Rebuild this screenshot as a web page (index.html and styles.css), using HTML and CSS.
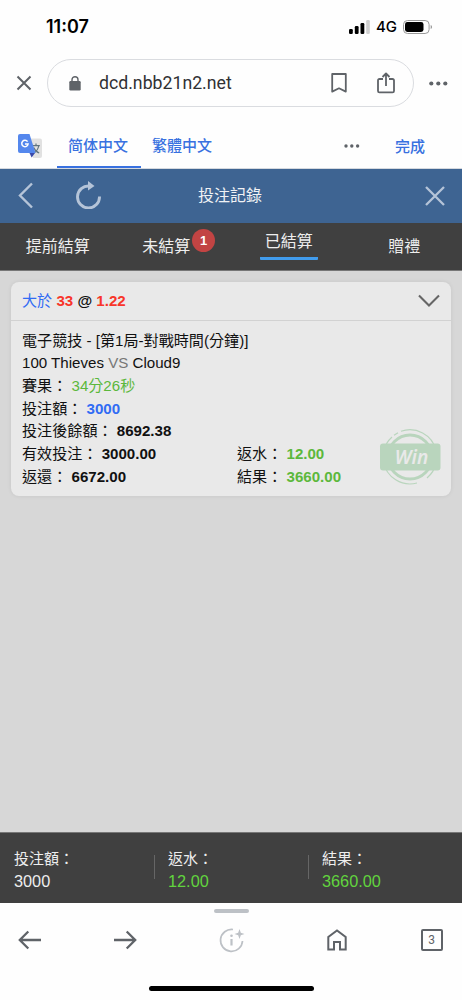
FILE: index.html
```html
<!DOCTYPE html>
<html lang="zh-Hant">
<head>
<meta charset="utf-8">
<title>投注記錄</title>
<link rel="stylesheet" href="styles.css">
</head>
<body>
<div class="status">
  <span class="clock">11:07</span>
  <span class="signals">
    <svg width="21" height="14" viewBox="0 0 21 14"><rect x="0" y="9" width="3.800" height="5" rx="1.2"/><rect x="5.800" y="6" width="3.800" height="8" rx="1.2"/><rect x="11.500" y="3" width="3.800" height="11" rx="1.2"/><rect x="17.200" y="0" width="3.600" height="14" rx="1.2" fill="#d0d0d0"/></svg>
    <span class="carrier">4G</span>
    <svg width="30" height="14" viewBox="0 0 30 14"><rect x=".5" y=".5" width="25.6" height="13" rx="4" fill="none" stroke="#999"/><rect x="2" y="2" width="18.5" height="10" rx="2.4"/><path d="M27.7 5v4q1.400-.5 1.400-2t-1.400-2z" fill="#999"/></svg>
  </span>
</div>
<div class="address">
  <svg class="close" width="16" height="16" viewBox="0 0 16 16" fill="none" stroke="#5f6368" stroke-width="2"><path d="M1.500 1.500l13 13M14.500 1.500l-13 13"/></svg>
  <div class="pill">
    <svg width="12" height="15" viewBox="0 0 12 15"><rect x=".3" y="5" width="11.400" height="9.500" rx="1.200" fill="#5f6368"/><path d="M3 6V3.700a3 3 0 0 1 6 0V6" fill="none" stroke="#5f6368" stroke-width="1.400"/></svg>
    <span class="url">dcd.nbb21n2.net</span>
    <svg class="bookmark" width="16" height="20" viewBox="0 0 16 20" fill="none" stroke="#5f6368" stroke-width="1.800" stroke-linejoin="round"><path d="M1.200 1h13.600v17.600L8 15.300l-6.800 3.300z"/></svg>
    <svg width="18" height="22" viewBox="0 0 18 22" fill="none" stroke="#5f6368" stroke-width="1.800" stroke-linejoin="round"><path d="M6 7H2.500Q1 7 1 8.500v10.400q0 1.500 1.500 1.500h13q1.500 0 1.500-1.500V8.500Q17 7 15.500 7H12M9 14V1.800M5.500 5L9 1.500 12.500 5"/></svg>
  </div>
  <svg width="19" height="5" viewBox="0 0 19 5" fill="#5f6368"><circle cx="2.300" cy="2.500" r="2.100"/><circle cx="9.300" cy="2.500" r="2.100"/><circle cx="16.300" cy="2.500" r="2.100"/></svg>
</div>
<div class="translate" lang="zh-Hans">
  <svg class="g-icon" width="25" height="25" viewBox="0 0 25 25"><path d="M9 4.500h13q2 0 2 2V22q0 2-2 2h-7z" fill="#e1e1e1"/><path d="M11.500 19H17l-3.400 4.500z" fill="#3949ab"/><path d="M14.500 11.700h7.300M18 9.600v2M20.700 12q-1 5-5 7M15.700 13.500q1.500 4 5.500 5.500" fill="none" stroke="#60747e" stroke-width="1.200"/><path d="M2 0h9.500l6 19H2q-2 0-2-2V2q0-2 2-2z" fill="#5487ed"/><path d="M9.600 7.700A3.200 3.200 0 1 0 10.100 10H7" fill="none" stroke="#fff" stroke-width="1.500"/></svg>
  <span class="lang lang-on">简体中文</span>
  <span class="lang lang-off" lang="zh-Hant">繁體中文</span>
  <svg class="dots" width="16" height="4" viewBox="0 0 16 4" fill="#5f6368"><circle cx="2" cy="2" r="1.700"/><circle cx="7.800" cy="2" r="1.700"/><circle cx="13.600" cy="2" r="1.700"/></svg>
  <span class="done">完成</span>
</div>
<header class="bar">
  <svg class="back" width="16" height="27" viewBox="0 0 16 27" fill="none" stroke="#b5c4d8" stroke-width="2.400"><path d="M14 1.500L2 13.500l12 12"/></svg>
  <svg class="reload" width="26" height="28" viewBox="0 0 26 28"><path d="M23.500 15.500A11 11 0 1 1 13.500 5" fill="none" stroke="#b5c4d8" stroke-width="2.900"/><path d="M12 0l6.500 5-6.500 4.500z" fill="#b5c4d8"/></svg>
  <h1>投注記錄</h1>
  <svg width="20" height="20" viewBox="0 0 20 20" fill="none" stroke="#b5c4d8" stroke-width="2.300"><path d="M1 1l18 18M19 1L1 19"/></svg>
</header>
<nav class="tabs">
  <span class="tab">提前結算</span>
  <span class="tab tab-pending">未結算<b class="badge">1</b></span>
  <span class="tab tab-on">已結算</span>
  <span class="tab">贈禮</span>
</nav>
<main>
  <section class="card">
    <div class="card-head">
      <span><span class="blue">大於</span> <b class="red">33</b> <b>@</b> <b class="red">1.22</b></span>
      <svg width="22" height="14" viewBox="0 0 22 14" fill="none" stroke="#666" stroke-width="2.100"><path d="M1 1.500l10 10 10-10"/></svg>
    </div>
    <div class="card-body">
      <div>電子競技 - [第1局-對戰時間(分鐘)]</div>
      <div>100 Thieves <span class="vs">VS</span> Cloud9</div>
      <div>賽果： <span class="green">34分26秒</span></div>
      <div>投注額： <b class="blue">3000</b></div>
      <div>投注後餘額： <b>8692.38</b></div>
      <div class="pair"><span>有效投注： <b>3000.00</b></span><span>返水： <b class="green">12.00</b></span></div>
      <div class="pair"><span>返還： <b>6672.00</b></span><span>結果： <b class="green">3660.00</b></span></div>
      <svg class="stamp" width="62" height="58" viewBox="0 0 62 58"><g fill="none" stroke="#b9d5bd"><circle cx="31" cy="29" r="22" stroke-width="3"/><path d="M22 3.200A27 27 0 0 1 57 22M4.500 24A27 27 0 0 1 13 9M15 7.200l4-2.500M4.500 34A27 27 0 0 0 38 55M48 50A27 27 0 0 0 57 35" stroke-width="1.200"/></g><rect x="1" y="15.500" width="60.500" height="27" rx="3" fill="#b9d5bd"/><text x="32.500" y="36" text-anchor="middle" class="win">Win</text></svg>
    </div>
  </section>
</main>
<footer class="totals">
  <div class="total">投注額：<br><span class="sum">3000</span></div>
  <div class="total">返水：<br><span class="sum lime">12.00</span></div>
  <div class="total">結果：<br><span class="sum lime">3660.00</span></div>
</footer>
<div class="browser">
  <div class="grabber"></div>
  <div class="tools">
    <svg width="24" height="20" viewBox="0 0 24 20" fill="none" stroke="#5f6368" stroke-width="2.300"><path d="M23 10H2M10.300 1.500L1.800 10l8.500 8.500"/></svg>
    <svg class="forward" width="24" height="20" viewBox="0 0 24 20" fill="none" stroke="#5f6368" stroke-width="2.300"><path d="M1 10h21M13.700 1.500l8.500 8.500-8.500 8.500"/></svg>
    <svg class="info" width="26" height="26" viewBox="0 0 26 26"><path d="M14 2.500A11 11 0 1 0 23.500 14" fill="none" stroke="#bdc1c6" stroke-width="1.700"/><path d="M12.500 12v6.500" stroke="#bdc1c6" stroke-width="2.200"/><circle cx="12.500" cy="8.700" r="1.300" fill="#bdc1c6"/><path d="M20.500 2l1.300 3.700 3.700 1.300-3.700 1.300-1.300 3.700-1.300-3.700L15.500 7l3.700-1.300z" fill="#bdc1c6"/></svg>
    <svg class="home" width="20" height="22" viewBox="0 0 20 22" fill="none" stroke="#5f6368" stroke-width="2"><path d="M1.300 20.500V8L10 1.500 18.700 8v12.500H13V13H7v7.500z"/></svg>
    <span class="count">3</span>
  </div>
  <div class="home-line"></div>
</div>
</body>
</html>
```
FILE: styles.css
```css
* { box-sizing: border-box; }
svg { display: block; flex: none; }
body {
  margin: 0;
  width: 462px;
  height: 1000px;
  display: flex;
  flex-direction: column;
  overflow: hidden;
  background: #fefefe;
  color: #111;
  font-family: "Liberation Sans", "Noto Sans CJK TC", sans-serif;
  font-size: 15px;
}
.status {
  height: 54px;
  flex: none;
  display: flex;
  align-items: center;
  justify-content: space-between;
  padding: 0 29px 0 46px;
}
.clock { font: 600 18px/22px Inter, sans-serif; color: #000; }
.signals { display: flex; align-items: center; }
.carrier { font: 500 15px/20px Inter, sans-serif; margin: 0 6px; color: #000; }
.address {
  height: 58px;
  flex: none;
  display: flex;
  align-items: center;
  padding: 0 14px 0 16px;
}
.pill {
  width: 367px;
  height: 48px;
  margin: 0 15px 0 15px;
  flex: none;
  display: flex;
  align-items: center;
  border: 1px solid #dadce0;
  border-radius: 24px;
  padding: 0 18px 0 21px;
}
.url { font: 17.700px/22px Roboto, sans-serif; color: #303134; margin-left: 18px; flex: 1; }
.bookmark { margin-right: 30px; }
.translate {
  height: 57px;
  flex: none;
  display: flex;
  align-items: center;
  padding-left: 18px;
  border-bottom: 1px solid #d5d9df;
  color: #3871e0;
}
.g-icon { margin-top: 12px; }
.lang, .done { font: 500 15px/22px "Noto Sans CJK SC", sans-serif; }
.lang {
  height: 45px;
  padding: 11px 12px 0 11px;
  margin-top: 10px;
}
.lang-on { border-bottom: 2px solid #3871e0; margin-left: 14px; padding-right: 13px; }
.lang-off { font-family: "Noto Sans CJK TC", sans-serif; }
.dots { margin: 12px 0 0 120px; }
.done { margin: 11px 0 0 35px; }
.bar {
  height: 54px;
  flex: none;
  display: flex;
  align-items: center;
  padding: 0 17px 0 18px;
  background: #3e6492;
}
.back { margin-bottom: 2px; }
.reload { margin: 0 0 3px 42px; }
.bar h1 {
  flex: 1;
  margin: 0 96px 0 93px;
  padding-left: 3px;
  font-size: 16px;
  font-weight: 400;
  line-height: 24px;
  color: #f0f2f5;
  white-space: nowrap;
}
.tabs {
  height: 47px;
  flex: none;
  display: grid;
  grid-template-columns: repeat(4, 1fr);
  align-items: center;
  justify-items: center;
  background: #404040;
  color: #eee;
  font-size: 16px;
  line-height: 24px;
}
.tab { position: relative; }
.tab-pending { margin-right: 14px; }
.tab-on { border-bottom: 3px solid #419ced; border-radius: 1px; padding: 0 5px 3px; height: 30px; margin-bottom: 4px; }
.badge {
  position: absolute;
  left: 50px;
  top: -6px;
  width: 23px;
  height: 23px;
  border-radius: 50%;
  background: #c24443;
  color: #fff;
  font-size: 13px;
  line-height: 23px;
  text-align: center;
}
main {
  flex: 1;
  padding: 11px 11px 0;
  background: #d7d7d7;
  border-top: 1px solid #777;
}
.card {
  height: 214px;
  background: #e9e9e9;
  border-radius: 8px;
  box-shadow: 0 0 4px rgba(0, 0, 0, .08);
  font-size: 15.100px;
}
.card-head {
  height: 39px;
  display: flex;
  align-items: center;
  justify-content: space-between;
  padding: 0 11px;
  border-bottom: 1px solid #d2d2d2;
}
.card-head > span { margin-bottom: 5px; }
.card-body { position: relative; padding: 8.500px 11px; line-height: 22.700px; }
.card-body > div { height: 22.700px; white-space: nowrap; }
.pair { display: grid; grid-template-columns: 215px 1fr; }
.stamp { position: absolute; right: 10px; top: 107px; }
.win { font: italic 600 19px "Noto Sans", sans-serif; fill: #e9e9e9; }
.blue { color: #316cf4; }
.red { color: #f8352a; }
.green { color: #5cb83c; }
.lime { color: #62d43e; }
.vs { color: #777; }
.totals {
  height: 71px;
  flex: none;
  display: grid;
  grid-template-columns: repeat(3, 154px);
  align-items: center;
  padding-top: 4px;
  background: #404040;
  border-top: 1px solid #777;
  color: #eee;
}
.total { padding-left: 14px; line-height: 22.500px; height: 45px; }
.total + .total { background: linear-gradient(#666, #666) 0 7px / 1px 24px no-repeat; }
.sum { font-size: 16.300px; }
.browser { height: 97px; flex: none; padding-top: 6px; }
.grabber { width: 35px; height: 4px; border-radius: 2px; background: #bdc1c6; margin: 0 auto; }
.tools { height: 53px; display: flex; align-items: center; padding-left: 18px; }
.forward { margin-left: 71px; }
.info { margin-left: 82px; }
.home { margin-left: 81.500px; }
.count {
  width: 22px;
  height: 22px;
  margin-left: 74px;
  border: 2px solid #5f6368;
  border-radius: 2px;
  color: #5f6368;
  font: 12px/18px Roboto, sans-serif;
  text-align: center;
}
.home-line { width: 165px; height: 5px; border-radius: 3px; background: #000; margin: 20px auto 0; }
```
